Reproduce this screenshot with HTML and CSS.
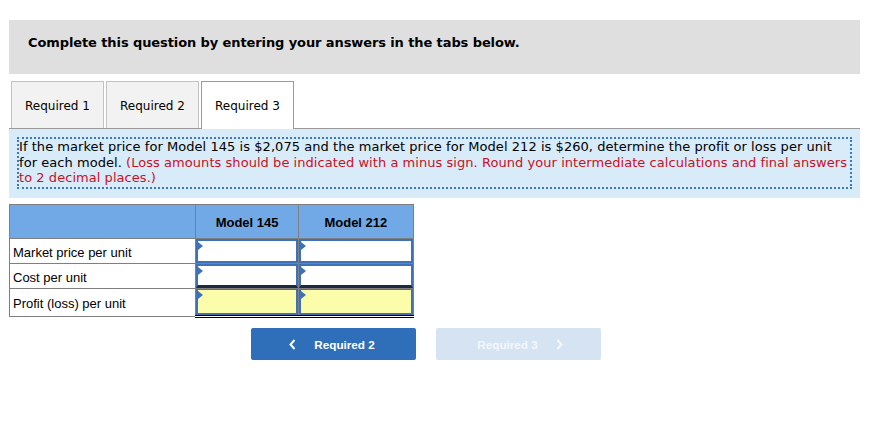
FILE: index.html
```html
<!DOCTYPE html>
<html>
<head>
<meta charset="utf-8">
<link rel="stylesheet" href="styles.css">
</head>
<body>
<div class="page">
  <div class="header">Complete this question by entering your answers in the tabs below.</div>
  <div class="tabs">
    <div class="tab">Required 1</div>
    <div class="tab">Required 2</div>
    <div class="tab active">Required 3</div>
  </div>
  <div class="panel">
    <div class="question">If the market price for Model 145 is $2,075 and the market price for Model 212 is $260, determine the profit or loss per unit<br>for each model. <span class="red">(Loss amounts should be indicated with a minus sign. Round your intermediate calculations and final answers<br>to 2 decimal places.)</span></div>
  </div>
  <table class="grid">
    <tr class="head">
      <th class="c1"></th>
      <th class="c2">Model 145</th>
      <th class="c3">Model 212</th>
    </tr>
    <tr class="r1">
      <td class="label">Market price per unit</td>
      <td class="cell"><div class="inp"><span class="tri"></span></div></td>
      <td class="cell"><div class="inp"><span class="tri"></span></div></td>
    </tr>
    <tr class="r2">
      <td class="label">Cost per unit</td>
      <td class="cell"><div class="inp dark"><span class="tri"></span></div></td>
      <td class="cell"><div class="inp dark"><span class="tri"></span></div></td>
    </tr>
    <tr class="r3">
      <td class="label">Profit (loss) per unit</td>
      <td class="cell total"><div class="inp yellow"><span class="tri"></span></div></td>
      <td class="cell total"><div class="inp yellow"><span class="tri"></span></div></td>
    </tr>
  </table>
  <div class="nav">
    <div class="btn prev"><svg class="chev left" width="7" height="11" viewBox="0 0 7 11"><polyline points="5.5,1 1.5,5.5 5.5,10" fill="none" stroke="#fff" stroke-width="2"/></svg>Required 2</div>
    <div class="btn next">Required 3<svg class="chev right" width="7" height="11" viewBox="0 0 7 11"><polyline points="1.5,1 5.5,5.5 1.5,10" fill="none" stroke="#f3f7fc" stroke-width="2"/></svg></div>
  </div>
</div>
</body>
</html>
```
FILE: styles.css
```css
html, body {
  margin: 0;
  padding: 0;
  background: #fff;
}
.page {
  padding: 20px 0 0 9px;
  width: 851px;
  font-family: "DejaVu Sans", Verdana, sans-serif;
  color: #000;
}
.header {
  background: #dfdfdf;
  height: 54px;
  box-sizing: border-box;
  padding: 15px 0 0 19px;
  font-size: 13px;
  line-height: 16px;
  font-weight: bold;
  letter-spacing: -0.1px;
}
.tabs {
  display: flex;
  gap: 2px;
  margin-top: 7px;
  padding-left: 2px;
  height: 47px;
}
.tab {
  width: 93px;
  box-sizing: border-box;
  border: 1px solid #c2c2c2;
  border-bottom: none;
  background: #f2f2f2;
  display: flex;
  align-items: center;
  justify-content: center;
  font-size: 12px;
  padding-top: 2px;
}
.tab.active {
  background: #fff;
  border-color: #9a9a9a;
  position: relative;
  z-index: 1;
  height: 48px;
  padding-top: 1px;
}
.panel {
  background: #d7ebf9;
  border-top: 1px solid #9a9a9a;
  padding: 8px 8px 9px 8px;
}
.question {
  border: 2px dotted #3b78c6;
  padding: 0 0 1px 0;
  font-size: 13px;
  line-height: 15.7px;
  letter-spacing: 0.05px;
  white-space: nowrap;
}
.red {
  color: #cc0f1f;
}
.grid {
  margin-top: 6px;
  border-collapse: collapse;
  font-family: "Liberation Sans", Arial, sans-serif;
  font-size: 13px;
  line-height: 14px;
  table-layout: fixed;
  width: 405px;
}
.grid th, .grid td {
  border: 1px solid #7f7f7f;
  padding: 0;
}
.grid .head th {
  background: #70a9e5;
  height: 34px;
  font-weight: bold;
  font-size: 13px;
  padding-top: 2px;
  box-sizing: border-box;
}
.c1 { width: 186px; }
.c2 { width: 102px; }
.c3 { width: 115px; }
.label {
  padding: 3px 0 0 3px !important;
  vertical-align: middle;
}
.inp {
  box-sizing: border-box;
  height: 24px;
  border: 2px solid #3d72ba;
  background: #fff;
  position: relative;
}
.inp.dark {
  border-bottom: 3px solid #1b2a3f;
}
.inp.yellow {
  height: 26px;
  background: #fbfdaa;
  border-top-width: 1px;
}
.cell.total {
  border-bottom: 3px double #000;
}
.tri {
  position: absolute;
  left: 0;
  top: 1px;
  width: 0;
  height: 0;
  border-top: 4px solid transparent;
  border-bottom: 4px solid transparent;
  border-left: 5px solid #3d72ba;
}
.nav {
  display: flex;
  gap: 20px;
  margin-top: 10px;
  padding-left: 242px;
}
.btn {
  width: 165px;
  height: 32px;
  border-radius: 2px;
  display: flex;
  align-items: center;
  justify-content: center;
  font-family: "Liberation Sans", Arial, sans-serif;
  font-weight: bold;
  font-size: 11.7px;
  color: #fff;
}
.btn.prev {
  background: #2f6fba;
}
.btn.next {
  background: #d6e3f3;
  color: #f3f7fc;
}
.chev.left { margin-right: 18px; margin-left: -3px; }
.chev.right { margin-left: 18px; margin-right: -3px; }
```
